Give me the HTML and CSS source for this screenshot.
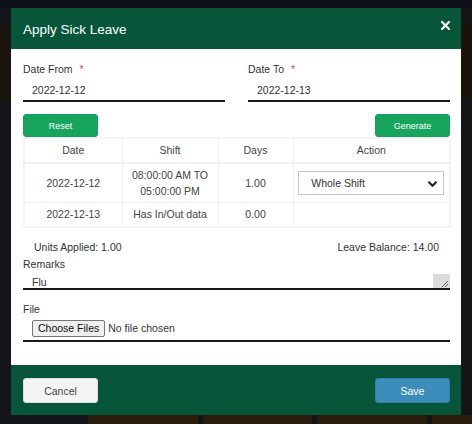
FILE: index.html
```html
<!DOCTYPE html>
<html>
<head>
<meta charset="utf-8">
<link rel="stylesheet" href="styles.css">
</head>
<body>
<div class="page">
  <div class="modal">
    <div class="modal-header">
      <span class="modal-title">Apply Sick Leave</span>
      <svg class="close" width="9" height="9" viewBox="0 0 9 9"><path d="M1 1L8 8M8 1L1 8" stroke="#fff" stroke-width="2.2" stroke-linecap="square"/></svg>
    </div>
    <div class="modal-body">
      <div class="date-grid">
        <div class="field">
          <div class="label">Date From <span class="req">*</span></div>
          <div class="input">2022-12-12</div>
        </div>
        <div class="field">
          <div class="label">Date To <span class="req">*</span></div>
          <div class="input">2022-12-13</div>
        </div>
      </div>
      <div class="btn-row">
        <button class="btn btn-success">Reset</button>
        <button class="btn btn-success">Generate</button>
      </div>
      <table class="grid">
        <colgroup><col class="c1"><col class="c2"><col class="c3"><col class="c4"></colgroup>
        <thead>
          <tr><th>Date</th><th>Shift</th><th>Days</th><th>Action</th></tr>
        </thead>
        <tbody>
          <tr class="tall">
            <td>2022-12-12</td>
            <td>08:00:00 AM TO<br>05:00:00 PM</td>
            <td>1.00</td>
            <td>
              <div class="select">
                <span>Whole Shift</span>
                <svg width="11" height="8" viewBox="0 0 11 8"><path d="M1.5 1.8L5.5 5.8L9.5 1.8" fill="none" stroke="#222" stroke-width="2.2"/></svg>
              </div>
            </td>
          </tr>
          <tr>
            <td>2022-12-13</td>
            <td>Has In/Out data</td>
            <td>0.00</td>
            <td></td>
          </tr>
        </tbody>
      </table>
      <div class="summary">
        <span>Units Applied: 1.00</span>
        <span>Leave Balance: 14.00</span>
      </div>
      <div class="label remarks-label">Remarks</div>
      <div class="textarea">
        <span>Flu</span>
        <span class="grip"><svg width="17" height="14" viewBox="0 0 17 14"><path d="M9 13L15 7M12 13L15 10" stroke="#555" stroke-width="0.9"/></svg></span>
      </div>
      <div class="label file-label">File</div>
      <div class="file-row">
        <span class="file-btn">Choose Files</span>
        <span class="file-text">No file chosen</span>
      </div>
    </div>
    <div class="modal-footer">
      <button class="btn btn-default">Cancel</button>
      <button class="btn btn-primary">Save</button>
    </div>
  </div>
  <div class="under">
    <span class="u1"></span><span class="u2"></span><span class="u3"></span><span class="u4"></span>
  </div>
</div>
</body>
</html>
```

FILE: styles.css
```css
* { box-sizing: border-box; }
html, body { margin: 0; padding: 0; }
body {
  background: #131518;
  font-family: "Liberation Sans", Arial, sans-serif;
  width: 472px;
  height: 424px;
  overflow: hidden;
}
.page {
  padding-top: 8px;
  background: linear-gradient(#0b1019 0, #0b1019 8px, transparent 8px),
              linear-gradient(90deg, #1b140d 0, #1b140d 11px, transparent 11px, transparent 461px, #1a130b 461px) 0 25px / 472px 75px no-repeat;
  height: 424px;
}
.modal {
  margin: 0 11px;
  width: 450px;
  background: #fff;
  color: #333;
}
.modal-header {
  height: 41px;
  background: #07563a;
  display: flex;
  align-items: center;
  justify-content: space-between;
  padding: 0 12px 0 12px;
}
.modal-title {
  color: #fff;
  font-size: 13.5px;
  margin-top: 2px;
}
.close { margin-top: -7px; margin-right: -1px; }
.modal-body {
  padding: 13px 11px 23px 12px;
  font-size: 10.5px;
}
.date-grid {
  display: grid;
  grid-template-columns: 202px 202px;
  column-gap: 23px;
}
.label {
  line-height: 14px;
  height: 14px;
  color: #333;
}
.req { color: #dd4b39; margin-left: 4px; }
.input {
  margin-top: 4px;
  height: 22px;
  line-height: 20px;
  padding-left: 9px;
  border-bottom: 2px solid #1a1a1a;
  color: #333;
}
.btn-row {
  margin-top: 12px;
  display: flex;
  justify-content: space-between;
}
.btn {
  font-family: "Liberation Sans", Arial, sans-serif;
  width: 75px;
  height: 23px;
  border-radius: 3px;
  border: 1px solid transparent;
  padding: 0;
  cursor: pointer;
}
.btn-success {
  background: #17a55e;
  border-color: #12a058;
  color: #fff;
  font-size: 9px;
}
.grid {
  width: 426px;
  border-collapse: collapse;
  table-layout: fixed;
  border: 2px solid #f4f4f4;
  font-size: 10.5px;
  color: #444;
}
.c1 { width: 98px; }
.c2 { width: 96px; }
.c3 { width: 75px; }
.c4 { width: 157px; }
.grid th, .grid td {
  border: 1px solid #f0f0f0;
  text-align: center;
  font-weight: normal;
  line-height: 16px;
  padding: 3px 4px 4px;
  vertical-align: middle;
}
.grid thead th { border-bottom: 2px solid #f0f0f0; }
.grid tr.tall td { height: 39px; padding-top: 3px; padding-bottom: 3px; }
.select {
  margin: 0 auto;
  width: 146px;
  height: 24px;
  border: 1px solid #c6c6c6;
  display: flex;
  align-items: center;
  justify-content: space-between;
  padding: 0 5px 0 12px;
  color: #333;
  text-align: left;
}
.select svg { margin-top: 1px; }
.summary {
  margin-top: 12px;
  display: flex;
  justify-content: space-between;
  padding: 0 11px;
  line-height: 14px;
  color: #333;
}
.remarks-label { margin-top: 3px; }
.textarea {
  height: 19px;
  padding: 4px 0 0 9px;
  line-height: 14px;
  border-bottom: 2px solid #1a1a1a;
  display: flex;
  justify-content: space-between;
}
.grip {
  width: 17px;
  height: 14px;
  background: #dcdcdc;
  display: block;
  margin-top: -1px;
}
.grip svg { display: block; }
.file-label { margin-top: 12px; }
.file-row {
  height: 26px;
  padding: 4px 0 0 9px;
  border-bottom: 2px solid #1a1a1a;
  display: flex;
  align-items: flex-start;
}
.file-btn {
  display: inline-block;
  height: 17px;
  line-height: 15px;
  padding: 0 5px;
  border: 1px solid #767676;
  border-radius: 2px;
  background: #efefef;
  color: #111;
}
.file-text { margin-left: 3px; line-height: 17px; color: #333; }
.modal-footer {
  height: 50px;
  background: #07563a;
  display: flex;
  justify-content: space-between;
  align-items: flex-start;
  padding: 13px 11px 0 12px;
}
.modal-footer .btn { height: 25px; font-size: 10.5px; }
.btn-default {
  background: #f4f4f4;
  border-color: #ddd;
  color: #444;
}
.btn-primary {
  background: #3c8dbc;
  border-color: #367fa9;
  color: #fff;
}
.under {
  display: flex;
  gap: 5px;
  padding-left: 88px;
  height: 9px;
}
.under span { display: block; height: 9px; background: #2a1c0c; }
.u1 { width: 110px; }
.u2 { width: 110px; }
.u3 { width: 110px; }
.u4 { width: 40px; }
```
